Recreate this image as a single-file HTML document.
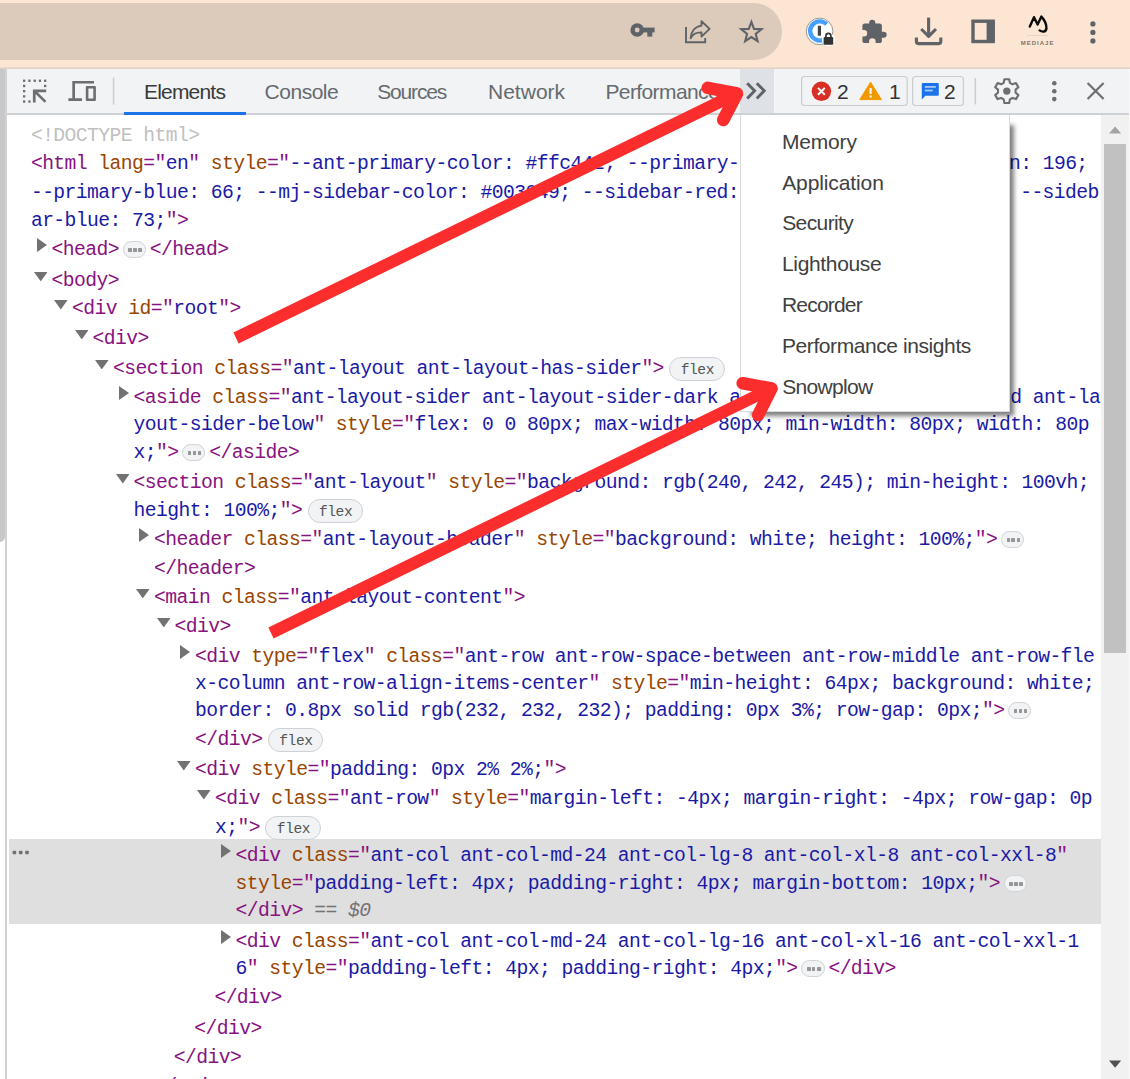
<!DOCTYPE html>
<html lang="en">
<head>
<meta charset="utf-8">
<title>DevTools - Snowplow</title>
<style>
*{box-sizing:border-box;margin:0;padding:0}
html,body{width:1130px;height:1079px;overflow:hidden;background:#fff}
body{position:relative;font-family:"Liberation Sans",sans-serif;color:#333}
.abs{position:absolute}
#chrome{position:absolute;left:0;top:0;width:1130px;height:69px;background:#fce6d3}
#pill{position:absolute;left:-40px;top:2.6px;width:822.4px;height:57.6px;border-radius:29px;background:#dccaba}
#chromeline{position:absolute;left:0;top:67.1px;width:1130px;height:2px;background:linear-gradient(#efdccd,#dfcfc3)}
#tb{position:absolute;left:0;top:69px;width:1130px;height:44.4px;background:#f1f3f4}
#tbline{position:absolute;left:0;top:113.2px;width:1130px;height:1.6px;background:#cdd0d4}
#more{position:absolute;left:740.4px;top:69px;width:33.2px;height:44.4px;background:#dee1e6}
#lstrip{position:absolute;left:0;top:69px;width:5.4px;height:473px;background:#c8c8c8;border-radius:0 0 5px 0}
#lline{position:absolute;left:5.4px;top:69px;width:1.8px;height:1010px;background:#d0d2d6}
#redge{position:absolute;left:1128.7px;top:69px;width:1.3px;height:1010px;background:#fafafa}
.tab{position:absolute;font-size:21px;line-height:24px;height:24px;color:#666a6f;white-space:nowrap}
.tab.sel{color:#3a3a3a}
#uline{position:absolute;left:124.4px;top:111.6px;width:121.2px;height:3.2px;background:#1a73e8}
.ln{position:absolute;white-space:pre;font-family:"Liberation Mono",monospace;font-size:19.7px;line-height:24px;height:24px;letter-spacing:-0.573px}
.t{color:#881280}.n{color:#994500}.v{color:#1a1aa6}.d{color:#c0c0c0}.g{color:#737373}.it{font-style:italic}
.ar{position:absolute;fill:#727272}
.dots{display:inline-block;width:23.2px;height:17.2px;border:1.4px solid #cfd2d6;border-radius:8.6px;background:#f1f3f4;vertical-align:-3.2px;margin:0 3.8px 0 3.8px;position:relative}
.dots b{position:absolute;top:6px;width:3.5px;height:3.5px;background:#979797;border-radius:0.6px}
.dots b:nth-child(1){left:4.6px}.dots b:nth-child(2){left:9.5px}.dots b:nth-child(3){left:14.6px}
.flex{display:inline-block;font-style:normal;font-family:"Liberation Mono",monospace;font-size:14.6px;letter-spacing:-0.45px;line-height:17px;height:23.8px;width:55.6px;text-align:center;padding:3.6px 0 0 0.6px;border:1.2px solid #ced1d5;border-radius:12px;background:#f1f3f4;color:#555;vertical-align:0;margin-left:5.4px}
#sel{position:absolute;left:9.2px;top:839px;width:1091.8px;height:84.6px;background:#dfdfdf}
#sb{position:absolute;left:1100.8px;top:114.6px;width:27.9px;height:965px;background:#f1f1f1}
#thumb{position:absolute;left:1104.1px;top:143.9px;width:22px;height:509.2px;background:#c1c1c1}
#msh{position:absolute;left:755px;top:129px;width:255.4px;height:283.4px;box-shadow:0 0 4.4px 3.6px rgba(0,0,0,.5)}
#menu{position:absolute;left:740.2px;top:114.6px;width:270px;height:297.8px;background:#fff;border:1px solid #d9dadd;border-top:none}
.mi{position:absolute;font-size:21px;line-height:24px;height:24px;color:#404040;white-space:nowrap}
.num{position:absolute;font-size:21px;line-height:24px;height:24px;color:#333}
</style>
</head>
<body>
<div id="chrome"><div id="pill"></div></div>
<div id="chromeline"></div>
<div id="tb"></div>
<div id="more"></div>
<div id="tbline"></div>
<div id="lstrip"></div>
<div id="lline"></div>
<div id="redge"></div>
<div id="sel"></div>
<div id="uline"></div>
<div class="tab sel" style="left:144.00px;top:80.46px;letter-spacing:-0.805px">Elements</div>
<div class="tab" style="left:264.60px;top:80.46px;letter-spacing:-0.495px">Console</div>
<div class="tab" style="left:377.20px;top:80.46px;letter-spacing:-1.156px">Sources</div>
<div class="tab" style="left:488.00px;top:80.46px;letter-spacing:0.014px">Network</div>
<div class="tab" style="left:605.40px;top:80.46px;letter-spacing:-0.594px">Performance</div>
<div class="num" style="left:837.00px;top:80.46px;letter-spacing:0.000px">2</div>
<div class="num" style="left:889.00px;top:80.46px;letter-spacing:0.000px">1</div>
<div class="num" style="left:944.00px;top:80.46px;letter-spacing:0.000px">2</div>
<div class="ln" style="left:30.9px;top:124.0px"><span class="d">&lt;!DOCTYPE html&gt;</span></div>
<div class="ln" style="left:30.9px;top:152.0px"><span class="t">&lt;html </span><span class="n">lang</span><span class="t">=&quot;</span><span class="v">en</span><span class="t">&quot; </span><span class="n">style</span><span class="t">=&quot;</span><span class="v">--ant-primary-color: #ffc442; --primary-red: 255; --primary-green: 196;</span></div>
<div class="ln" style="left:30.9px;top:181.0px"><span class="v">--primary-blue: 66; --mj-sidebar-color: #003049; --sidebar-red: 0; --sidebar-green: 48; --sideb</span></div>
<div class="ln" style="left:30.9px;top:209.0px"><span class="v">ar-blue: 73;</span><span class="t">&quot;&gt;</span></div>
<svg class="ar" style="left:36.9px;top:238.0px" width="10" height="14" viewBox="0 0 10 14"><path d="M0 0L10 7L0 14Z"/></svg><div class="ln" style="left:51.5px;top:238.0px"><span class="t">&lt;head&gt;</span><i class="dots"><b></b><b></b><b></b></i><span class="t">&lt;/head&gt;</span></div>
<svg class="ar" style="left:33.9px;top:271.6px" width="13.6" height="9.4" viewBox="0 0 13.6 9.4"><path d="M0 0L13.6 0L6.8 9.4Z"/></svg><div class="ln" style="left:51.5px;top:269.0px"><span class="t">&lt;body&gt;</span></div>
<svg class="ar" style="left:54.4px;top:300.2px" width="13.6" height="9.4" viewBox="0 0 13.6 9.4"><path d="M0 0L13.6 0L6.8 9.4Z"/></svg><div class="ln" style="left:72.0px;top:297.0px"><span class="t">&lt;div </span><span class="n">id</span><span class="t">=&quot;</span><span class="v">root</span><span class="t">&quot;&gt;</span></div>
<svg class="ar" style="left:74.9px;top:329.6px" width="13.6" height="9.4" viewBox="0 0 13.6 9.4"><path d="M0 0L13.6 0L6.8 9.4Z"/></svg><div class="ln" style="left:92.5px;top:327.0px"><span class="t">&lt;div&gt;</span></div>
<svg class="ar" style="left:95.4px;top:359.6px" width="13.6" height="9.4" viewBox="0 0 13.6 9.4"><path d="M0 0L13.6 0L6.8 9.4Z"/></svg><div class="ln" style="left:113.0px;top:357.0px"><span class="t">&lt;section </span><span class="n">class</span><span class="t">=&quot;</span><span class="v">ant-layout ant-layout-has-sider</span><span class="t">&quot;&gt;</span><i class="flex">flex</i></div>
<svg class="ar" style="left:118.9px;top:385.6px" width="10" height="14" viewBox="0 0 10 14"><path d="M0 0L10 7L0 14Z"/></svg><div class="ln" style="left:133.5px;top:386.0px"><span class="t">&lt;aside </span><span class="n">class</span><span class="t">=&quot;</span><span class="v">ant-layout-sider ant-layout-sider-dark ant-layout-sider-collapsed ant-la</span></div>
<div class="ln" style="left:133.5px;top:413.0px"><span class="v">yout-sider-below</span><span class="t">&quot; </span><span class="n">style</span><span class="t">=&quot;</span><span class="v">flex: 0 0 80px; max-width: 80px; min-width: 80px; width: 80p</span></div>
<div class="ln" style="left:133.5px;top:441.0px"><span class="v">x;</span><span class="t">&quot;&gt;</span><i class="dots"><b></b><b></b><b></b></i><span class="t">&lt;/aside&gt;</span></div>
<svg class="ar" style="left:115.9px;top:474.4px" width="13.6" height="9.4" viewBox="0 0 13.6 9.4"><path d="M0 0L13.6 0L6.8 9.4Z"/></svg><div class="ln" style="left:133.5px;top:471.0px"><span class="t">&lt;section </span><span class="n">class</span><span class="t">=&quot;</span><span class="v">ant-layout</span><span class="t">&quot; </span><span class="n">style</span><span class="t">=&quot;</span><span class="v">background: rgb(240, 242, 245); min-height: 100vh;</span></div>
<div class="ln" style="left:133.5px;top:499.0px"><span class="v">height: 100%;</span><span class="t">&quot;&gt;</span><i class="flex">flex</i></div>
<svg class="ar" style="left:139.4px;top:528.2px" width="10" height="14" viewBox="0 0 10 14"><path d="M0 0L10 7L0 14Z"/></svg><div class="ln" style="left:154.0px;top:528.0px"><span class="t">&lt;header </span><span class="n">class</span><span class="t">=&quot;</span><span class="v">ant-layout-header</span><span class="t">&quot; </span><span class="n">style</span><span class="t">=&quot;</span><span class="v">background: white; height: 100%;</span><span class="t">&quot;&gt;</span><i class="dots"><b></b><b></b><b></b></i></div>
<div class="ln" style="left:154.0px;top:557.0px"><span class="t">&lt;/header&gt;</span></div>
<svg class="ar" style="left:136.4px;top:589.0px" width="13.6" height="9.4" viewBox="0 0 13.6 9.4"><path d="M0 0L13.6 0L6.8 9.4Z"/></svg><div class="ln" style="left:154.0px;top:586.0px"><span class="t">&lt;main </span><span class="n">class</span><span class="t">=&quot;</span><span class="v">ant-layout-content</span><span class="t">&quot;&gt;</span></div>
<svg class="ar" style="left:156.9px;top:618.0px" width="13.6" height="9.4" viewBox="0 0 13.6 9.4"><path d="M0 0L13.6 0L6.8 9.4Z"/></svg><div class="ln" style="left:174.5px;top:615.0px"><span class="t">&lt;div&gt;</span></div>
<svg class="ar" style="left:180.4px;top:645.2px" width="10" height="14" viewBox="0 0 10 14"><path d="M0 0L10 7L0 14Z"/></svg><div class="ln" style="left:195.0px;top:645.0px"><span class="t">&lt;div </span><span class="n">type</span><span class="t">=&quot;</span><span class="v">flex</span><span class="t">&quot; </span><span class="n">class</span><span class="t">=&quot;</span><span class="v">ant-row ant-row-space-between ant-row-middle ant-row-fle</span></div>
<div class="ln" style="left:195.0px;top:672.0px"><span class="v">x-column ant-row-align-items-center</span><span class="t">&quot; </span><span class="n">style</span><span class="t">=&quot;</span><span class="v">min-height: 64px; background: white;</span></div>
<div class="ln" style="left:195.0px;top:699.0px"><span class="v">border: 0.8px solid rgb(232, 232, 232); padding: 0px 3%; row-gap: 0px;</span><span class="t">&quot;&gt;</span><i class="dots"><b></b><b></b><b></b></i></div>
<div class="ln" style="left:195.0px;top:728.0px"><span class="t">&lt;/div&gt;</span><i class="flex">flex</i></div>
<svg class="ar" style="left:177.4px;top:761.2px" width="13.6" height="9.4" viewBox="0 0 13.6 9.4"><path d="M0 0L13.6 0L6.8 9.4Z"/></svg><div class="ln" style="left:195.0px;top:758.0px"><span class="t">&lt;div </span><span class="n">style</span><span class="t">=&quot;</span><span class="v">padding: 0px 2% 2%;</span><span class="t">&quot;&gt;</span></div>
<svg class="ar" style="left:197.4px;top:790.2px" width="13.6" height="9.4" viewBox="0 0 13.6 9.4"><path d="M0 0L13.6 0L6.8 9.4Z"/></svg><div class="ln" style="left:215.0px;top:787.0px"><span class="t">&lt;div </span><span class="n">class</span><span class="t">=&quot;</span><span class="v">ant-row</span><span class="t">&quot; </span><span class="n">style</span><span class="t">=&quot;</span><span class="v">margin-left: -4px; margin-right: -4px; row-gap: 0p</span></div>
<div class="ln" style="left:215.0px;top:816.0px"><span class="v">x;</span><span class="t">&quot;&gt;</span><i class="flex">flex</i></div>
<svg class="ar" style="left:220.9px;top:843.6px" width="10" height="14" viewBox="0 0 10 14"><path d="M0 0L10 7L0 14Z"/></svg><div class="ln" style="left:235.5px;top:844.0px"><span class="t">&lt;div </span><span class="n">class</span><span class="t">=&quot;</span><span class="v">ant-col ant-col-md-24 ant-col-lg-8 ant-col-xl-8 ant-col-xxl-8</span><span class="t">&quot;</span></div>
<div class="ln" style="left:235.5px;top:872.0px"><span class="n">style</span><span class="t">=&quot;</span><span class="v">padding-left: 4px; padding-right: 4px; margin-bottom: 10px;</span><span class="t">&quot;&gt;</span><i class="dots"><b></b><b></b><b></b></i></div>
<div class="ln" style="left:235.5px;top:899.0px"><span class="t">&lt;/div&gt;</span><span class="g"> == </span><span class="g it">$0</span></div>
<svg class="ar" style="left:220.9px;top:929.9px" width="10" height="14" viewBox="0 0 10 14"><path d="M0 0L10 7L0 14Z"/></svg><div class="ln" style="left:235.5px;top:930.0px"><span class="t">&lt;div </span><span class="n">class</span><span class="t">=&quot;</span><span class="v">ant-col ant-col-md-24 ant-col-lg-16 ant-col-xl-16 ant-col-xxl-1</span></div>
<div class="ln" style="left:235.5px;top:957.0px"><span class="v">6</span><span class="t">&quot; </span><span class="n">style</span><span class="t">=&quot;</span><span class="v">padding-left: 4px; padding-right: 4px;</span><span class="t">&quot;&gt;</span><i class="dots"><b></b><b></b><b></b></i><span class="t">&lt;/div&gt;</span></div>
<div class="ln" style="left:214.4px;top:986.0px"><span class="t">&lt;/div&gt;</span></div>
<div class="ln" style="left:194.3px;top:1017.0px"><span class="t">&lt;/div&gt;</span></div>
<div class="ln" style="left:173.8px;top:1046.0px"><span class="t">&lt;/div&gt;</span></div>
<div class="ln" style="left:154.0px;top:1075.0px"><span class="t">&lt;/main&gt;</span></div>
<div id="sb"></div>
<div id="thumb"></div>
<div id="msh"></div>
<div id="menu"></div>
<div class="mi" style="left:782.00px;top:129.86px;letter-spacing:-0.188px">Memory</div>
<div class="mi" style="left:782.20px;top:170.66px;letter-spacing:-0.105px">Application</div>
<div class="mi" style="left:782.20px;top:211.46px;letter-spacing:-0.601px">Security</div>
<div class="mi" style="left:782.00px;top:252.26px;letter-spacing:-0.342px">Lighthouse</div>
<div class="mi" style="left:782.00px;top:293.06px;letter-spacing:-0.811px">Recorder</div>
<div class="mi" style="left:782.00px;top:333.86px;letter-spacing:-0.419px">Performance insights</div>
<div class="mi" style="left:782.20px;top:374.66px;letter-spacing:-0.694px">Snowplow</div>
<svg id="ov" class="abs" style="left:0;top:0" width="1130" height="1079" viewBox="0 0 1130 1079">
<!-- browser bar icons -->
<g id="key" fill="#5f6368">
<circle cx="637.2" cy="30" r="6.8"/><circle cx="637.2" cy="30" r="2.4" fill="#ddc9ba"/>
<rect x="641" y="27.6" width="13.6" height="4.8"/><rect x="647.3" y="30" width="5" height="6.6"/>
</g>
<g id="share" fill="none" stroke="#5f6368" stroke-width="1.9" stroke-linejoin="miter">
<path d="M686 27V42.3H705.2V38"/>
<path d="M701.5 21.2L709.6 28.9L701.5 36.6V32.4C695.5 32.2 692.6 34.3 690.6 38.2C691.2 31.5 695 26.4 701.5 25.6Z" stroke-linejoin="round"/>
</g>
<path id="star" d="M751.4 21.9L754.0 28.9L761.5 29.2L755.7 33.9L757.6 41.1L751.4 37.0L745.2 41.1L747.1 33.9L741.3 29.2L748.8 28.9Z" fill="none" stroke="#5f6368" stroke-width="2.1" stroke-linejoin="miter"/>
<g id="ext">
<circle cx="819.6" cy="31.4" r="13.3" fill="#fff" stroke="#8a8a8a" stroke-width="0.9"/>
<path d="M826.6 24.2A9.6 9.6 0 1 0 829 33.6" fill="none" stroke="#46a0ff" stroke-width="4.4"/>
<rect x="817.8" y="25.8" width="3.2" height="10" rx="0.6" fill="#444"/>
<circle cx="828.4" cy="39.6" r="6.6" fill="#fff"/>
<rect x="823.6" y="37" width="9.6" height="7.8" rx="1.2" fill="#333"/>
<path d="M825.9 37.4V35.8A2.5 2.5 0 0 1 830.9 35.8V37.4" fill="none" stroke="#333" stroke-width="1.7"/>
</g>
<path id="puzzle" fill="#5f6368" transform="translate(874.35 31.35) scale(0.955 0.945) translate(-874.6 -30.4)" d="M884.3 30.8h-1.8v-6.4c0-1.3-1-2.3-2.3-2.3h-4.6v-0.9a3.2 3.2 0 0 0-6.4 0v0.9h-4.8c-1.3 0-2.3 1-2.3 2.3v4.6h1.6a3.4 3.4 0 0 1 0 6.8h-1.6v4.7c0 1.3 1 2.3 2.3 2.3h4.7v-1.6a3.4 3.4 0 0 1 6.8 0v1.6h4.3c1.3 0 2.3-1 2.3-2.3v-3.3h1.8a3.2 3.2 0 0 0 0-6.4z"/>
<g id="dl" fill="none" stroke="#5f6368" stroke-width="3.1" stroke-linejoin="round">
<path d="M928.6 17.6V36"/><path d="M921.2 29L928.6 36.4L936 29"/>
<path d="M916.4 37.4V41.6a2 2 0 0 0 2 2h20.4a2 2 0 0 0 2-2V37.4"/>
</g>
<g id="side"><rect x="973" y="21.2" width="20.2" height="20.3" fill="none" stroke="#5f6368" stroke-width="3.4"/><rect x="986.6" y="21" width="8" height="21" fill="#5f6368"/></g>
<g id="avatar">
<path d="M1029.8 26.6L1034 17.2L1037.6 24.6L1041.4 16.6C1044.5 20 1046.6 24.5 1046.4 28.4C1046.2 31.8 1042.6 32.6 1039.6 30.4" fill="none" stroke="#0a0a0a" stroke-width="2.4" stroke-linejoin="round" stroke-linecap="round"/>
<rect x="1027" y="35" width="21" height="0.8" fill="#e3cdbd"/>
<text x="1037.6" y="44.6" text-anchor="middle" font-family="Liberation Sans, sans-serif" font-size="6" font-weight="bold" fill="#7d736b" letter-spacing="1">MEDIAJE</text>
</g>
<g id="kebab1" fill="#5f6368"><circle cx="1092.9" cy="23.9" r="2.6"/><circle cx="1092.9" cy="32.4" r="2.6"/><circle cx="1092.9" cy="40.9" r="2.6"/></g>

<!-- devtools toolbar icons -->
<g id="inspect" fill="#6e6e6e">
<rect x="23" y="79.6" width="2.3" height="2.3"/><rect x="28.3" y="79.6" width="2.3" height="2.3"/><rect x="33.6" y="79.6" width="2.3" height="2.3"/><rect x="38.8" y="79.6" width="2.3" height="2.3"/><rect x="44" y="79.6" width="2.3" height="2.3"/>
<rect x="23" y="84.8" width="2.3" height="2.3"/><rect x="23" y="90" width="2.3" height="2.3"/><rect x="23" y="95.2" width="2.3" height="2.3"/><rect x="23" y="100.4" width="2.3" height="2.3"/>
<rect x="28.3" y="100.4" width="2.3" height="2.3"/><rect x="44" y="84.8" width="2.3" height="2.3"/>
<path d="M32.9 89.6H46.2V92.3H37.6L46.4 101L44.6 102.8L35.6 94V102.6H32.9Z"/>
</g>
<g id="device" fill="#6e6e6e">
<path d="M72.3 80.9H94V83.4H75V98.2H82V101.1H68.4V98.2H72.3Z"/>
<path fill-rule="evenodd" d="M85.8 87a1 1 0 0 1 1-1H94.9a1 1 0 0 1 1 1V100.1a1 1 0 0 1-1 1H86.8a1 1 0 0 1-1-1ZM88.4 88.6V98.5H93.3V88.6Z"/>
</g>
<rect x="112.8" y="77.6" width="1.5" height="27" fill="#c9ccd2"/>
<g id="chev" fill="none" stroke="#5f6368" stroke-width="2.9"><path d="M747.2 83.2L754.6 90.8L747.2 98.4"/><path d="M756.8 83.2L764.2 90.8L756.8 98.4"/></g>
<g id="err">
<rect x="801.6" y="76.5" width="105.6" height="29" rx="3" fill="none" stroke="#c9ccd1" stroke-width="1.2"/>
<circle cx="821.4" cy="91.3" r="9.7" fill="#d93025"/>
<path d="M818 87.9L824.8 94.7M824.8 87.9L818 94.7" stroke="#fff" stroke-width="2" fill="none"/>
<path d="M870.6 82.2L881.4 99.6H859.8Z" fill="#f29900" stroke="#f29900" stroke-width="1" stroke-linejoin="round"/>
<rect x="869.6" y="88" width="2" height="6" fill="#fff"/><rect x="869.6" y="95.4" width="2" height="2.2" fill="#fff"/>
<rect x="912.6" y="76.5" width="50.8" height="29" rx="3" fill="none" stroke="#c9ccd1" stroke-width="1.2"/>
<path d="M921.8 84.2a1.2 1.2 0 0 1 1.2-1.2H937.6a1.2 1.2 0 0 1 1.2 1.2V94.6a1.2 1.2 0 0 1-1.2 1.2H925.4L921.8 99.4Z" fill="#1a73e8"/>
<rect x="924.8" y="86" width="11" height="1.8" fill="#a8c7fa"/><rect x="924.8" y="89.6" width="8" height="1.8" fill="#a8c7fa"/>
</g>
<rect x="974.6" y="78" width="1.5" height="26.4" fill="#c9ccd2"/>
<g id="gear">
<path fill="none" stroke="#6e6e6e" stroke-width="2.1" stroke-linejoin="round" d="M1004.4 79.2h4.8l0.7 3.6 2.6 1.5 3.5-1.2 2.4 4.1-2.8 2.4v3l2.8 2.4-2.4 4.1-3.5-1.2-2.6 1.5-0.7 3.6h-4.8l-0.7-3.6-2.6-1.5-3.5 1.2-2.4-4.1 2.8-2.4v-3l-2.8-2.4 2.4-4.1 3.5 1.2 2.6-1.5z"/>
<circle cx="1006.8" cy="91.1" r="3.7" fill="#6e6e6e"/>
</g>
<g id="kebab2" fill="#6e6e6e"><circle cx="1054.3" cy="83.3" r="2.3"/><circle cx="1054.3" cy="91.2" r="2.3"/><circle cx="1054.3" cy="99.1" r="2.3"/></g>
<path id="close" d="M1087.6 83L1103.6 99M1103.6 83L1087.6 99" stroke="#6e6e6e" stroke-width="2.2" fill="none"/>
<!-- scrollbar arrows -->
<path d="M1109 133.6L1115.1 126.4L1121.2 133.6Z" fill="#a3a3a3"/>
<path d="M1109 1060.6H1121.2L1115.1 1067.8Z" fill="#505050"/>
<!-- selected row dots -->
<g fill="#717171"><rect x="12.6" y="850.8" width="3.6" height="3.4" rx="0.8"/><rect x="18.9" y="850.8" width="3.6" height="3.4" rx="0.8"/><rect x="25.2" y="850.8" width="3.6" height="3.4" rx="0.8"/></g>
<!-- red arrows -->
<g id="arrows" fill="none" stroke="#fb2d2d">
<path d="M236 338L737 93.5" stroke-width="12" stroke-linecap="butt"/>
<path d="M707.7 87.9L737 93.5L723.2 120" stroke-width="12.6" stroke-linecap="round" stroke-linejoin="round"/>
<path d="M271 633L771.5 388.5" stroke-width="12" stroke-linecap="butt"/>
<path d="M742.7 383.2L771.5 388.5L758.2 415" stroke-width="12.6" stroke-linecap="round" stroke-linejoin="round"/>
</g>
</svg>

</body>
</html>
